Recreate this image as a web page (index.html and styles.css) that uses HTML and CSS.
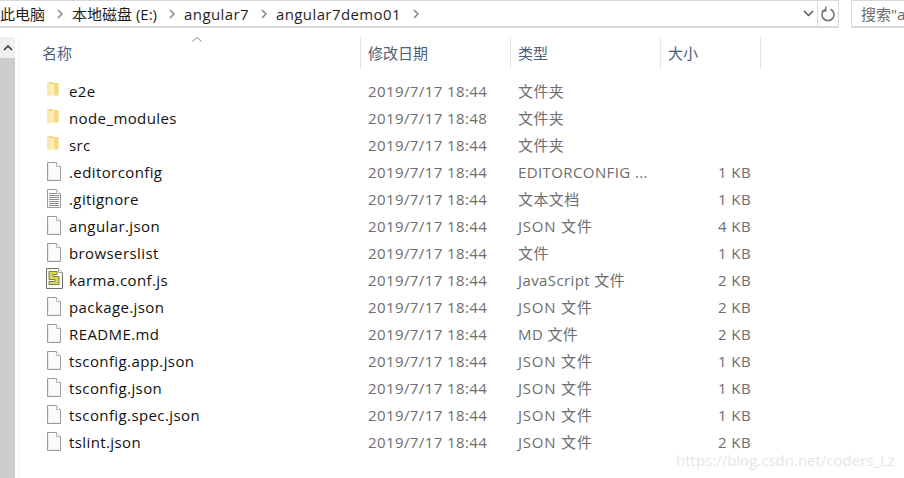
FILE: index.html
```html
<!DOCTYPE html>
<html lang="zh-CN">
<head>
<meta charset="utf-8">
<title>angular7demo01</title>
<link rel="stylesheet" href="styles.css">
</head>
<body>
<svg class="defs" width="0" height="0" aria-hidden="true">
  <defs>
    <symbol id="folder" viewBox="0 0 13 17">
      <path d="M1 1h5l1 1h5v12H1z" fill="#f3d27a"/>
      <path d="M1 1h1.500l1 1.500V16L1 14.500z" fill="#fbe9ae"/>
      <path d="M8.500 2h4v12.500h-4z" fill="#f6d779"/>
      <path d="M3.500 3h4.800v11.800H3.500z" fill="#fdeeba"/>
    </symbol>
    <symbol id="blank" viewBox="0 0 16 19">
      <path d="M1.500.5h9l4 4v14h-13z" fill="#fbfbfb" stroke="#9a9a9a"/>
      <path d="M10.500.5v4h4" fill="#fff" stroke="#b5b5b5"/>
      <path d="M2.500 1.500v16h11" fill="none" stroke="#ececec"/>
    </symbol>
    <symbol id="text" viewBox="0 0 16 19">
      <path d="M1.500.5h9l4 4v14h-13z" fill="#fbfbfb" stroke="#9a9a9a"/>
      <path d="M10.500.5v4h4" fill="#fff" stroke="#b5b5b5"/>
      <path d="M3 4.500h7M3 6.500h10M3 8.500h10M3 10.500h10M3 12.500h10M3 14.500h10M3 16.500h10" stroke="#8f8f8f"/>
    </symbol>
    <symbol id="script" viewBox="0 0 19 21">
      <path d="M1.500.5h12l4 4v16h-16z" fill="#fbfbf6" stroke="#6f6f6f"/>
      <path d="M13.500.5v4h4" fill="#fff" stroke="#a5a5a5"/>
      <path d="M4 3.500h8v3H8v2h6v8H4v-3h6v-2H4z" fill="#d9d65e" stroke="#5f6b2f" stroke-width=".8"/>
    </symbol>
  </defs>
</svg>

<header class="addressbar">
  <div class="address">
    <nav class="crumbs">
      <span>此电脑</span><svg class="sep" viewBox="0 0 6 10"><path d="M1 1l4 4-4 4" fill="none" stroke="#858585" stroke-width="1.500"/></svg>
      <span>本地磁盘 (E:)</span><svg class="sep" viewBox="0 0 6 10"><path d="M1 1l4 4-4 4" fill="none" stroke="#858585" stroke-width="1.500"/></svg>
      <span class="latin">angular7</span><svg class="sep" viewBox="0 0 6 10"><path d="M1 1l4 4-4 4" fill="none" stroke="#858585" stroke-width="1.500"/></svg>
      <span class="latin">angular7demo01</span><svg class="sep" viewBox="0 0 6 10"><path d="M1 1l4 4-4 4" fill="none" stroke="#858585" stroke-width="1.500"/></svg>
    </nav>
    <button class="drop" type="button" aria-label="历史记录">
      <svg viewBox="0 0 11 7" width="11" height="7"><path d="M1 1l4.500 4.500L10 1" fill="none" stroke="#555" stroke-width="1.500"/></svg>
    </button>
    <button class="refresh" type="button" aria-label="刷新">
      <svg viewBox="0 0 16 16" width="16" height="16"><path d="M5.500 3.200a6 6 0 1 0 5 0" fill="none" stroke="#7a7a7a" stroke-width="1.700"/><path d="M5.800 .5v4.500H1.800" fill="none" stroke="#7a7a7a" stroke-width="1.500"/></svg>
    </button>
  </div>
  <div class="search">搜索"angular7demo01"</div>
</header>

<main class="pane">
  <aside class="scrollbar">
    <div class="scroll-up"><svg viewBox="0 0 10 6" width="10" height="6"><path d="M1 5l4-4 4 4" fill="none" stroke="#333" stroke-width="1.500"/></svg></div>
  </aside>
  <section class="list">
    <div class="head">
      <div class="hcell name">名称<svg class="sort" viewBox="0 0 10 5" width="10" height="5"><path d="M.5 4.500L5 .5l4.500 4" fill="none" stroke="#8a8a8a"/></svg></div>
      <div class="hcell">修改日期</div>
      <div class="hcell">类型</div>
      <div class="hcell">大小</div>
    </div>
    <div class="rows">
      <div class="row"><span class="fname"><svg class="ic folder"><use href="#folder"/></svg>e2e</span><span>2019/7/17 18:44</span><span>文件夹</span><span class="num"></span></div>
      <div class="row"><span class="fname"><svg class="ic folder"><use href="#folder"/></svg>node_modules</span><span>2019/7/17 18:48</span><span>文件夹</span><span class="num"></span></div>
      <div class="row"><span class="fname"><svg class="ic folder"><use href="#folder"/></svg>src</span><span>2019/7/17 18:44</span><span>文件夹</span><span class="num"></span></div>
      <div class="row"><span class="fname"><svg class="ic"><use href="#blank"/></svg>.editorconfig</span><span>2019/7/17 18:44</span><span>EDITORCONFIG ...</span><span class="num">1 KB</span></div>
      <div class="row"><span class="fname"><svg class="ic"><use href="#text"/></svg>.gitignore</span><span>2019/7/17 18:44</span><span>文本文档</span><span class="num">1 KB</span></div>
      <div class="row"><span class="fname"><svg class="ic"><use href="#blank"/></svg>angular.json</span><span>2019/7/17 18:44</span><span class="json">JSON 文件</span><span class="num">4 KB</span></div>
      <div class="row"><span class="fname"><svg class="ic"><use href="#blank"/></svg>browserslist</span><span>2019/7/17 18:44</span><span>文件</span><span class="num">1 KB</span></div>
      <div class="row"><span class="fname"><svg class="ic script"><use href="#script"/></svg>karma.conf.js</span><span>2019/7/17 18:44</span><span>JavaScript 文件</span><span class="num">2 KB</span></div>
      <div class="row"><span class="fname"><svg class="ic"><use href="#blank"/></svg>package.json</span><span>2019/7/17 18:44</span><span class="json">JSON 文件</span><span class="num">2 KB</span></div>
      <div class="row"><span class="fname"><svg class="ic"><use href="#blank"/></svg>README.md</span><span>2019/7/17 18:44</span><span>MD 文件</span><span class="num">2 KB</span></div>
      <div class="row"><span class="fname"><svg class="ic"><use href="#blank"/></svg>tsconfig.app.json</span><span>2019/7/17 18:44</span><span class="json">JSON 文件</span><span class="num">1 KB</span></div>
      <div class="row"><span class="fname"><svg class="ic"><use href="#blank"/></svg>tsconfig.json</span><span>2019/7/17 18:44</span><span class="json">JSON 文件</span><span class="num">1 KB</span></div>
      <div class="row"><span class="fname"><svg class="ic"><use href="#blank"/></svg>tsconfig.spec.json</span><span>2019/7/17 18:44</span><span class="json">JSON 文件</span><span class="num">1 KB</span></div>
      <div class="row"><span class="fname"><svg class="ic"><use href="#blank"/></svg>tslint.json</span><span>2019/7/17 18:44</span><span class="json">JSON 文件</span><span class="num">2 KB</span></div>
    </div>
  </section>
</main>
<div class="watermark">https://blog.csdn.net/coders_Lz</div>
</body>
</html>
```

FILE: styles.css
```css
* { box-sizing: border-box; }
html, body {
  margin: 0;
  width: 904px;
  height: 478px;
  overflow: hidden;
  background: #fff;
  font-family: "Open Sans", "Noto Sans CJK SC", sans-serif;
  font-size: 15px;
  color: #1a1a1a;
}
.defs { position: absolute; }
.addressbar {
  display: flex;
  gap: 12px;
  height: 28px;
}
.address {
  flex: 0 0 839px;
  display: flex;
  align-items: center;
  border: solid #d9d9d9;
  border-width: 1px 1px 2px 0;
}
.crumbs {
  flex: 1;
  display: flex;
  align-items: center;
  white-space: nowrap;
  color: #1f1f1f;
}
.latin { letter-spacing: .4px; }
.sep { width: 6px; height: 10px; margin: 0 9px 0 12px; }
.drop {
  width: 17px;
  height: 100%;
  padding: 0;
  border: 0;
  background: none;
  display: flex;
  align-items: center;
  justify-content: center;
}
.refresh {
  width: 21px;
  height: 100%;
  padding: 0;
  border: 0;
  border-left: 1px solid #d9d9d9;
  background: none;
  display: flex;
  align-items: center;
  justify-content: center;
}
.search {
  flex: 1;
  min-width: 0;
  overflow: hidden;
  white-space: nowrap;
  border: solid #d9d9d9;
  border-width: 1px 0 2px 1px;
  padding: 2px 0 0 9px;
  color: #6d6d6d;
}
.pane {
  display: flex;
  padding-top: 9px;
}
.scrollbar {
  width: 15px;
  height: 441px;
  background: #cdcdcd;
  flex: none;
}
.scroll-up {
  height: 21px;
  background: #f0f0f0;
  display: flex;
  align-items: center;
  justify-content: center;
}
.list {
  flex: 1;
  border-left: 1px solid #f2f2f2;
  margin-left: 3px;
}
.head {
  display: grid;
  grid-template-columns: 342px 150px 150px 100px;
  height: 32px;
}
.hcell {
  position: relative;
  padding-left: 7px;
  line-height: 32px;
  border-right: 1px solid #e5e5e5;
  color: #4c607a;
}
.hcell.name { padding-left: 23px; }
.sort { position: absolute; left: 173px; top: 0; }
.rows { padding-top: 8px; }
.row {
  display: grid;
  grid-template-columns: 343px 150px 143px 96px;
  height: 27px;
  line-height: 20px;
  align-items: center;
  letter-spacing: .4px;
  color: #6d6d6d;
}
.row > span { padding-left: 6px; white-space: nowrap; }
.row > .fname {
  display: flex;
  align-items: center;
  padding-left: 27px;
  color: #111;
}
.row > .json { letter-spacing: .8px; }
.row > .num { padding: 0; text-align: right; }
.ic { width: 16px; height: 19px; margin-right: 7px; flex: none; }
.ic.folder { width: 13px; height: 17px; margin: 0 10px 2px 0; }
.ic.script { width: 19px; height: 21px; margin: 0 5px 3px -1px; }
.watermark {
  position: absolute;
  left: 676px;
  top: 452px;
  font-size: 15px;
  line-height: 16px;
  color: #e6e6e6;
  white-space: nowrap;
}
```
